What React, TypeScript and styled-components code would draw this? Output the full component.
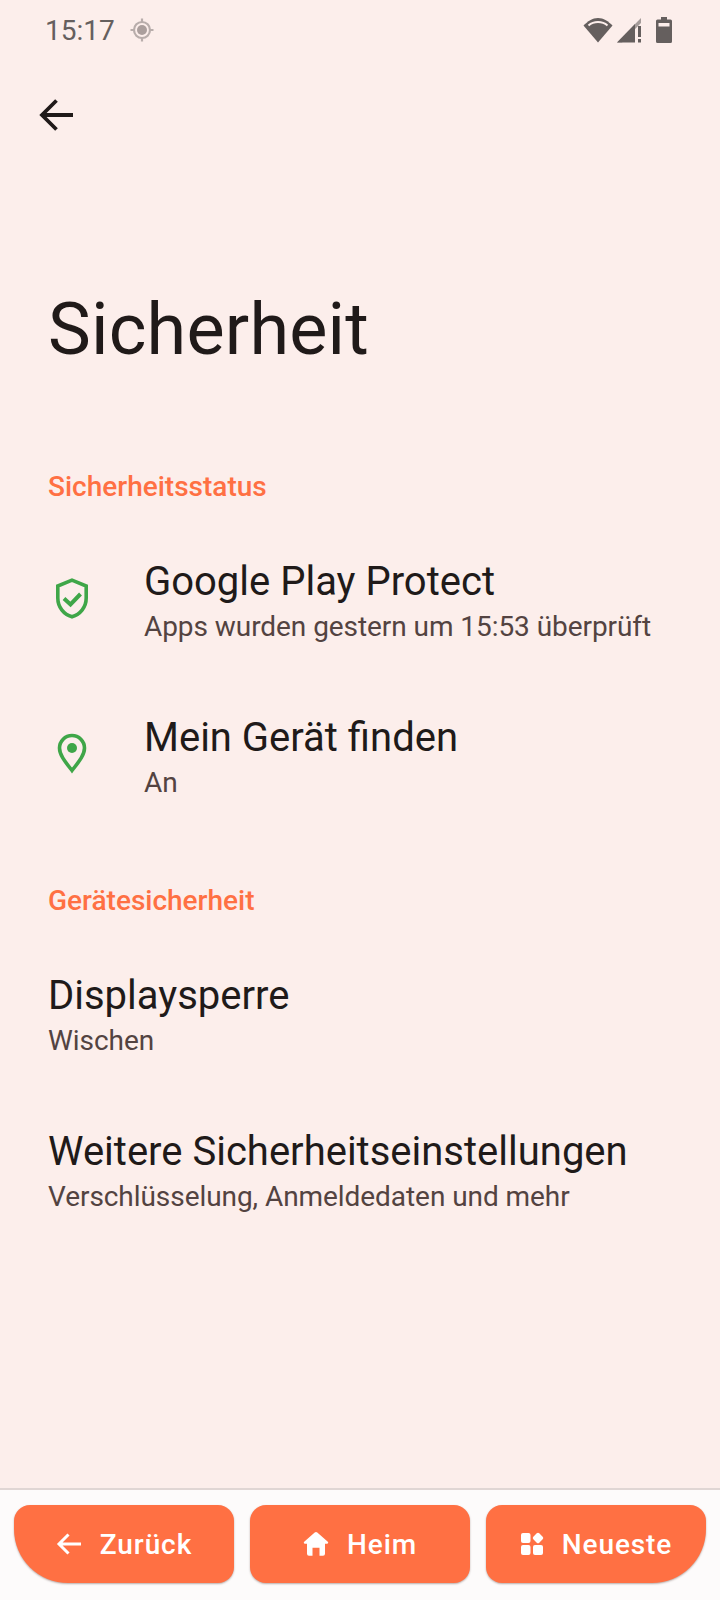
import React from 'react';
import styled, { createGlobalStyle } from 'styled-components';

const GlobalStyle = createGlobalStyle`
  html, body {
    margin: 0;
    padding: 0;
    background: #fceeeb;
  }
  * {
    box-sizing: border-box;
  }
`;

//#region Styled
const Screen = styled.div`
  width: 720px;
  height: 1600px;
  display: flex;
  flex-direction: column;
  background: #fceeeb;
  font-family: Roboto, 'Liberation Sans', sans-serif;
  overflow: hidden;
`;

const StatusBar = styled.div`
  height: 60px;
  flex: 0 0 auto;
  display: flex;
  align-items: center;
  justify-content: space-between;
  padding: 0 48px 0 45px;
  color: #655f5e;
`;

const StatusLeft = styled.div`
  display: flex;
  align-items: center;
  gap: 15px;
`;

const StatusRight = styled.div`
  display: flex;
  align-items: center;
  gap: 14px;
`;

const SignalGroup = styled.div`
  display: flex;
  align-items: center;
  gap: 4px;
`;

const Clock = styled.span`
  font-size: 28px;
`;

const BackRow = styled.div`
  height: 56px;
  flex: 0 0 auto;
  display: flex;
  align-items: center;
  padding-left: 36px;
  margin-top: 27px;
`;

const Content = styled.main`
  flex: 1 1 auto;
  display: flex;
  flex-direction: column;
`;

const Title = styled.h1`
  margin: 144px 0 0;
  padding-left: 48px;
  font-size: 72px;
  line-height: 86px;
  font-weight: 400;
  letter-spacing: 0.2px;
  color: #201a19;
`;

const SectionTitle = styled.div<{ $top: number }>`
  margin-top: ${(p) => p.$top}px;
  padding-left: 48px;
  font-size: 28px;
  line-height: 32px;
  font-weight: 500;
  color: #ff7043;
`;

const Row = styled.div<{ $top: number }>`
  margin-top: ${(p) => p.$top}px;
  display: flex;
  align-items: center;
  padding-left: 48px;
`;

const IconSlot = styled.div<{ $lift: number }>`
  width: 96px;
  flex: 0 0 auto;
  display: flex;
  justify-content: center;
  padding-right: 48px;
  margin-bottom: ${(p) => p.$lift}px;
`;

const RowText = styled.div`
  display: flex;
  flex-direction: column;
`;

const RowTitle = styled.div`
  font-size: 40px;
  line-height: 52px;
  color: #201a19;
`;

const RowSub = styled.div`
  font-size: 28px;
  line-height: 38px;
  letter-spacing: -0.06px;
  color: #534341;
`;

const NavBar = styled.nav`
  flex: 0 0 auto;
  height: 112px;
  display: flex;
  gap: 16px;
  padding: 15px 14px 0;
  border-top: 2px solid #e0d6d4;
  background: #fdfbfb;
`;

const NavButton = styled.div<{ $side?: 'left' | 'right' }>`
  flex: 1 1 0;
  height: 78px;
  display: flex;
  align-items: center;
  justify-content: center;
  gap: 18px;
  background: #ff7043;
  color: #ffffff;
  font-size: 28px;
  font-weight: 500;
  letter-spacing: 0.9px;
  border-radius: 16px;
  border-bottom-left-radius: ${(p) => (p.$side === 'left' ? '54px' : '16px')};
  border-bottom-right-radius: ${(p) => (p.$side === 'right' ? '54px' : '16px')};
  box-shadow: 0 1px 2px rgba(60, 30, 20, 0.35);
`;
//#endregion

const LocationDot = () => (
  <svg width="24" height="24" viewBox="0 0 24 24">
    <circle cx="12" cy="12" r="8" fill="none" stroke="#b8adab" strokeWidth="2.200" />
    <circle cx="12" cy="12" r="5" fill="#ab9f9d" />
    <path d="M12 0.500v3.500M12 20v3.500M0.500 12h3.500M20 12h3.500" stroke="#b8adab" strokeWidth="2.200" />
  </svg>
);

const Wifi = () => (
  <svg width="30" height="26" viewBox="0 0 30 26">
    <path d="M15 25.500 0.500 8.500C4.500 4.500 9.500 1 15 1s10.500 3.500 14.500 7.500Z" fill="#655f5e" />
    <path d="M5.500 8.500C8 6.300 11.300 5 15 5s7 1.300 9.500 3.500" fill="none" stroke="#fceeeb" strokeWidth="2" />
  </svg>
);

const Signal = () => (
  <svg width="25" height="26" viewBox="0 0 25 26">
    <path d="M0 25.500 24 1v5L5 25.500Z" fill="#a59c9a" />
    <path d="M0 25.500 18 7v18.500Z" fill="#655f5e" />
    <path d="M21 9h3v11h-3ZM21 22h3v3.500h-3Z" fill="#655f5e" />
  </svg>
);

const Battery = () => (
  <svg width="16" height="26" viewBox="0 0 16 26">
    <path d="M5 0h6v2.500h3.500Q16 2.500 16 4v20.500Q16 26 14.500 26h-13Q0 26 0 24.500V4Q0 2.500 1.500 2.500H5Z" fill="#655f5e" />
    <rect x="2.500" y="6" width="11" height="3.500" fill="#fceeeb" />
  </svg>
);

const BackArrow = () => (
  <svg width="40" height="40" viewBox="0 0 40 40" fill="none" stroke="#201a19" strokeWidth="3.800">
    <path d="M37 20H7M20.500 5.500 6 20l14.500 14.500" />
  </svg>
);

const ShieldCheck = () => (
  <svg width="34" height="41" viewBox="0 0 34 41" fill="none" stroke="#3fa648" strokeWidth="3.600">
    <path d="M17 2.200 2.800 8v12c0 9 5.800 16.300 14.200 18.800C25.400 36.300 31.200 29 31.200 20V8Z" />
    <path d="m9 20.500 6.500 6L25.500 16" strokeWidth="4" />
  </svg>
);

const Pin = () => (
  <svg width="30" height="41" viewBox="0 0 30 41" fill="none">
    <path d="M15 37.500C7 27.500 2.500 21.500 2.500 15a12.500 12.500 0 0 1 25 0c0 6.500-4.500 12.500-12.500 22.500Z" stroke="#3fa648" strokeWidth="3.600" />
    <circle cx="15" cy="15" r="5" fill="#3fa648" />
  </svg>
);

const ArrowSmall = () => (
  <svg width="26" height="24" viewBox="0 0 26 24" fill="none" stroke="#ffffff" strokeWidth="3">
    <path d="M25 12H3M12.500 2.500 3 12l9.500 9.500" />
  </svg>
);

const Home = () => (
  <svg width="26" height="26" viewBox="0 0 26 26" fill="#ffffff">
    <path d="M11.700 1.500a2 2 0 0 1 2.600 0l10.500 9.300c.8.700.3 2-.7 2H22v10a2 2 0 0 1-2 2h-3.500v-8h-7v8H6a2 2 0 0 1-2-2v-10H1.900c-1 0-1.500-1.300-.7-2Z" />
  </svg>
);

const Recents = () => (
  <svg width="24" height="24" viewBox="0 0 24 24" fill="#ffffff">
    <rect x="1" y="1" width="9.500" height="10" rx="2" />
    <rect x="1" y="13" width="9.500" height="10" rx="2" />
    <rect x="13" y="13" width="10" height="10" rx="2" />
    <rect x="13.800" y="1.800" width="8.400" height="8.400" rx="1.800" transform="rotate(45 18 6)" />
  </svg>
);

const App = () => {
  return (
    <Screen>
      <GlobalStyle />
      <StatusBar>
        <StatusLeft>
          <Clock>15:17</Clock>
          <LocationDot />
        </StatusLeft>
        <StatusRight>
          <SignalGroup>
            <Wifi />
            <Signal />
          </SignalGroup>
          <Battery />
        </StatusRight>
      </StatusBar>
      <BackRow>
        <BackArrow />
      </BackRow>
      <Content>
        <Title>Sicherheit</Title>
        <SectionTitle $top={98}>Sicherheitsstatus</SectionTitle>
        <Row $top={53}>
          <IconSlot $lift={6}>
            <ShieldCheck />
          </IconSlot>
          <RowText>
            <RowTitle>Google Play Protect</RowTitle>
            <RowSub>Apps wurden gestern um 15:53 überprüft</RowSub>
          </RowText>
        </Row>
        <Row $top={66}>
          <IconSlot $lift={8}>
            <Pin />
          </IconSlot>
          <RowText>
            <RowTitle>Mein Gerät finden</RowTitle>
            <RowSub>An</RowSub>
          </RowText>
        </Row>
        <SectionTitle $top={83}>Gerätesicherheit</SectionTitle>
        <Row $top={53}>
          <RowText>
            <RowTitle>Displaysperre</RowTitle>
            <RowSub>Wischen</RowSub>
          </RowText>
        </Row>
        <Row $top={66}>
          <RowText>
            <RowTitle>Weitere Sicherheitseinstellungen</RowTitle>
            <RowSub>Verschlüsselung, Anmeldedaten und mehr</RowSub>
          </RowText>
        </Row>
      </Content>
      <NavBar>
        <NavButton $side="left">
          <ArrowSmall />
          Zurück
        </NavButton>
        <NavButton>
          <Home />
          Heim
        </NavButton>
        <NavButton $side="right">
          <Recents />
          Neueste
        </NavButton>
      </NavBar>
    </Screen>
  );
};

export default App;
